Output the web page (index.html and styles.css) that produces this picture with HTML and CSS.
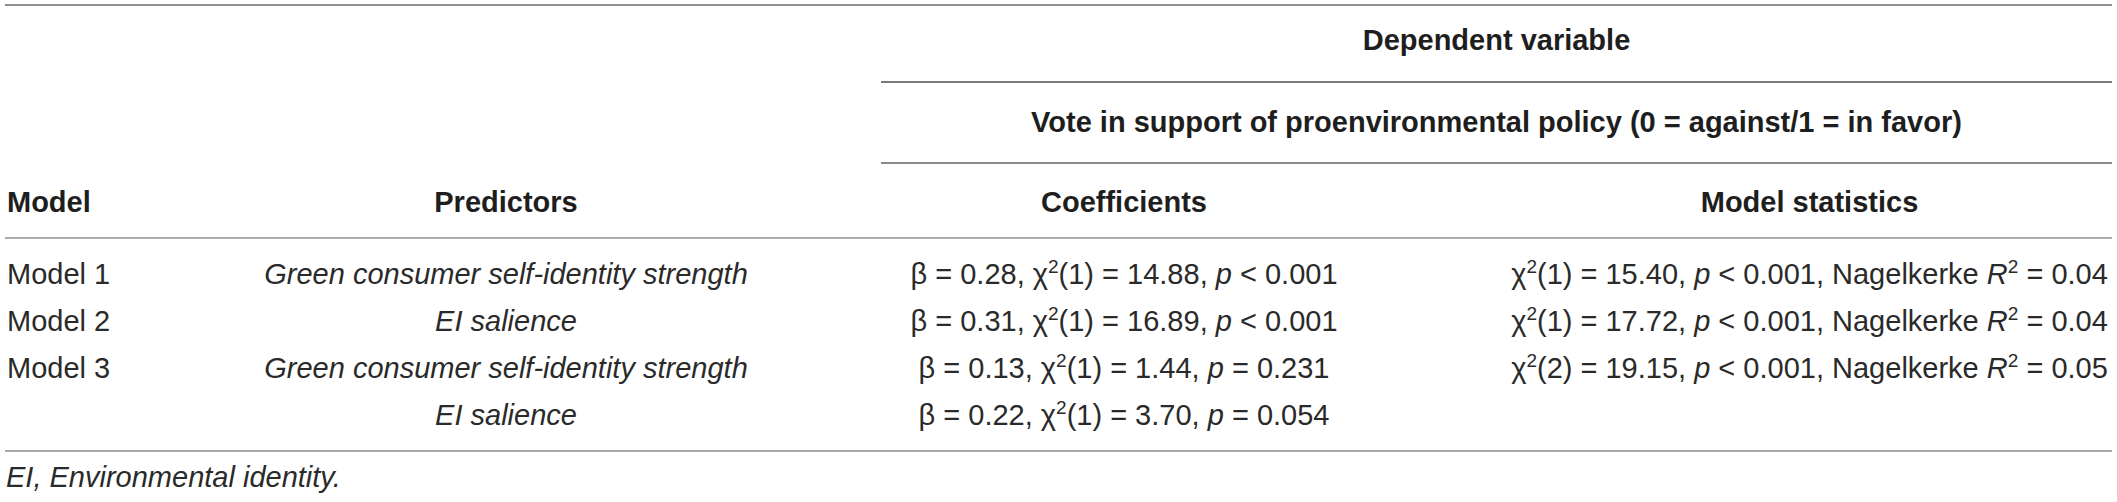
FILE: index.html
```html
<!DOCTYPE html>
<html lang="en">
<head>
<meta charset="utf-8">
<title>Logistic regression table</title>
<link rel="stylesheet" href="styles.css">
</head>
<body>
<div class="wrap">
  <table class="tbl">
    <colgroup>
      <col class="c1">
      <col class="c2">
      <col class="c3">
      <col class="c4">
    </colgroup>
    <thead>
      <tr class="r-dep">
        <th></th>
        <th></th>
        <th colspan="2" class="span">Dependent variable</th>
      </tr>
      <tr class="r-vote">
        <th></th>
        <th></th>
        <th colspan="2" class="span">Vote in support of proenvironmental policy (0 = against/1 = in favor)</th>
      </tr>
      <tr class="r-head">
        <th class="left">Model</th>
        <th>Predictors</th>
        <th>Coefficients</th>
        <th class="stats">Model statistics</th>
      </tr>
    </thead>
    <tbody>
      <tr class="first">
        <td class="left">Model 1</td>
        <td><i>Green consumer self-identity strength</i></td>
        <td>β = 0.28, χ<sup>2</sup>(1) = 14.88, <i>p</i> &lt; 0.001</td>
        <td class="stats">χ<sup>2</sup>(1) = 15.40, <i>p</i> &lt; 0.001, Nagelkerke <i>R</i><sup>2</sup> = 0.04</td>
      </tr>
      <tr>
        <td class="left">Model 2</td>
        <td><i>EI salience</i></td>
        <td>β = 0.31, χ<sup>2</sup>(1) = 16.89, <i>p</i> &lt; 0.001</td>
        <td class="stats">χ<sup>2</sup>(1) = 17.72, <i>p</i> &lt; 0.001, Nagelkerke <i>R</i><sup>2</sup> = 0.04</td>
      </tr>
      <tr>
        <td class="left">Model 3</td>
        <td><i>Green consumer self-identity strength</i></td>
        <td>β = 0.13, χ<sup>2</sup>(1) = 1.44, <i>p</i> = 0.231</td>
        <td class="stats">χ<sup>2</sup>(2) = 19.15, <i>p</i> &lt; 0.001, Nagelkerke <i>R</i><sup>2</sup> = 0.05</td>
      </tr>
      <tr class="last">
        <td class="left"></td>
        <td><i>EI salience</i></td>
        <td>β = 0.22, χ<sup>2</sup>(1) = 3.70, <i>p</i> = 0.054</td>
        <td class="stats"></td>
      </tr>
    </tbody>
  </table>
  <p class="note"><i>EI, Environmental identity.</i></p>
</div>
</body>
</html>
```

FILE: styles.css
```css
html, body {
  margin: 0;
  padding: 0;
  background: #ffffff;
}

.wrap {
  padding: 4px 5px 0 5px;
  font-family: "Liberation Sans", Arial, Helvetica, sans-serif;
  font-size: 29px;
  color: #2a2a2a;
}

.tbl {
  width: 2107px;
  table-layout: fixed;
  border-collapse: collapse;
  border-top: 2px solid #8e8e8e;
  border-bottom: 2px solid #a8a8a8;
}

.c1 { width: 126px; }
.c2 { width: 750px; }
.c3 { width: 486px; }
.c4 { width: 745px; }

.tbl th,
.tbl td {
  padding: 0;
  text-align: center;
  white-space: nowrap;
  line-height: 32px;
  vertical-align: middle;
}

.tbl th {
  font-weight: bold;
  color: #1e1e1e;
}

.tbl .left {
  text-align: left;
  padding-left: 2px;
}

.tbl .stats {
  padding-left: 140px;
}

.r-dep th {
  padding-top: 18px;
  padding-bottom: 25px;
}

.r-dep .span {
  border-bottom: 2px solid #7a7a7a;
}

.r-vote th {
  padding-top: 23px;
  padding-bottom: 24px;
}

.r-vote .span {
  border-bottom: 2px solid #8a8a8a;
}

.r-head th {
  padding-top: 22px;
  padding-bottom: 19px;
  border-bottom: 2px solid #ababab;
}

.tbl tbody td {
  line-height: 47px;
  font-weight: normal;
}

.tbl tbody tr.first td {
  padding-top: 12px;
}

.tbl tbody tr.last td {
  padding-bottom: 11px;
}

.tbl sup {
  font-size: 19px;
  line-height: 0;
  vertical-align: 11px;
}

.note {
  margin: 9px 0 0 1px;
  line-height: 32px;
  font-size: 29px;
  color: #2a2a2a;
}
```
